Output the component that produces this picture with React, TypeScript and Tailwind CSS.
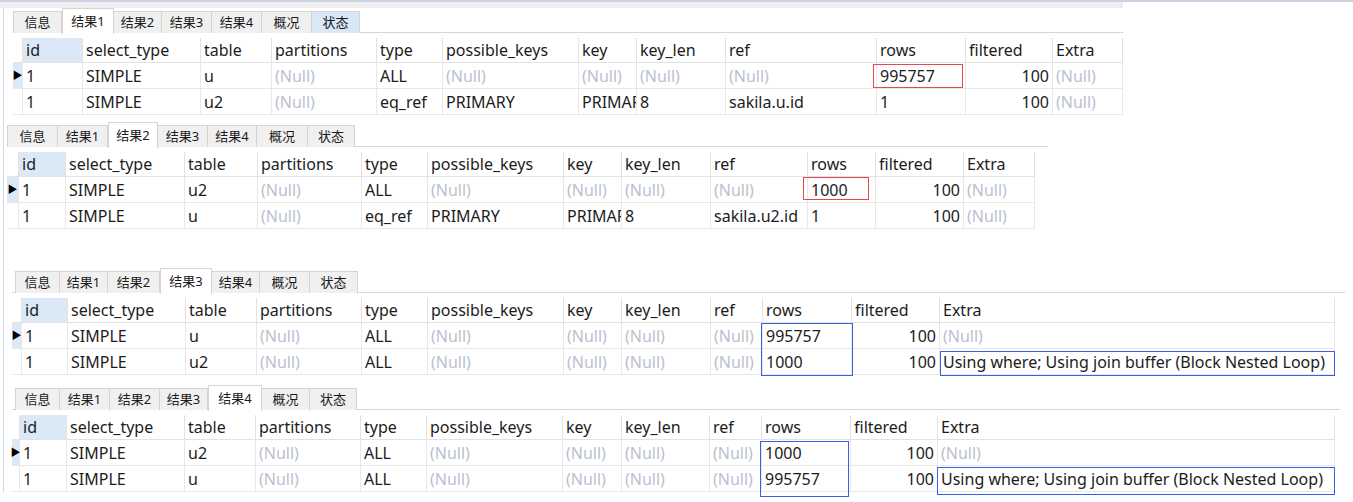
// Four stacked Navicat-style EXPLAIN result panels.
// Each panel is described once in `panels`; its column track sizes,
// offsets and highlight boxes are full Tailwind class strings.

type Cell = string | null;

type Panel = {
  active: number;
  hover?: number;
  bar: string; // tab bar offset, width and tab inset
  tabCols: string;
  table: string; // table offset + column tracks
  gap: string;
  rows: Cell[][];
  boxes: { cls: string; red?: boolean }[];
};

const headers = [
  "id",
  "select_type",
  "table",
  "partitions",
  "type",
  "possible_keys",
  "key",
  "key_len",
  "ref",
  "rows",
  "filtered",
  "Extra",
];

const tabs = ["信息", "结果1", "结果2", "结果3", "结果4", "概况", "状态"];

const nested = "Using where; Using join buffer (Block Nested Loop)";

const panels: Panel[] = [
  {
    active: 1,
    hover: 6,
    bar: "ml-[9px] w-[1110px]",
    tabCols: "grid-cols-[49px_52px_48px_50px_50px_50px_48px]",
    table: "ml-[9px] grid-cols-[10px_60px_118px_71px_105px_66px_136px_58px_89px_151px_89px_87px_70px]",
    gap: "",
    rows: [
      ["1", "SIMPLE", "u", null, "ALL", null, null, null, null, "995757", "100", null],
      ["1", "SIMPLE", "u2", null, "eq_ref", "PRIMARY", "PRIMARY", "8", "sakila.u.id", "1", "100", null],
    ],
    boxes: [{ cls: "left-[869px] top-[26px] h-[24px] w-[90px]", red: true }],
  },
  {
    active: 2,
    bar: "ml-[3px] w-[1041px]",
    tabCols: "grid-cols-[51px_50px_50px_50px_49px_51px_47px]",
    table: "ml-[3px] grid-cols-[12px_47px_119px_73px_104px_66px_136px_58px_89px_97px_68px_88px_71px]",
    gap: "mt-[7px]",
    rows: [
      ["1", "SIMPLE", "u2", null, "ALL", null, null, null, null, "1000", "100", null],
      ["1", "SIMPLE", "u", null, "eq_ref", "PRIMARY", "PRIMARY", "8", "sakila.u2.id", "1", "100", null],
    ],
    boxes: [{ cls: "left-[799px] top-[25px] h-[23px] w-[66px]", red: true }],
  },
  {
    active: 3,
    bar: "ml-[8px] w-[1333px] pl-[3px]",
    tabCols: "grid-cols-[45px_48px_52px_52px_48px_50px_48px]",
    table: "ml-[8px] grid-cols-[10px_46px_118px_71px_105px_66px_136px_58px_89px_52px_89px_88px_395px]",
    gap: "mt-[39px]",
    rows: [
      ["1", "SIMPLE", "u", null, "ALL", null, null, null, null, "995757", "100", null],
      ["1", "SIMPLE", "u2", null, "ALL", null, null, null, null, "1000", "100", nested],
    ],
    boxes: [
      { cls: "left-[757px] top-[25px] h-[53px] w-[92px]" },
      { cls: "left-[936px] top-[53px] h-[25px] w-[395px]" },
    ],
  },
  {
    active: 4,
    bar: "ml-[8px] w-[1328px] pl-[3px]",
    tabCols: "grid-cols-[45px_50px_50px_48px_54px_48px_47px]",
    table: "ml-[8px] grid-cols-[8px_47px_118px_71px_105px_66px_136px_59px_88px_52px_89px_87px_397px]",
    gap: "mt-[10px]",
    rows: [
      ["1", "SIMPLE", "u2", null, "ALL", null, null, null, null, "1000", "100", null],
      ["1", "SIMPLE", "u", null, "ALL", null, null, null, null, "995757", "100", nested],
    ],
    boxes: [
      { cls: "left-[756px] top-[26px] h-[56px] w-[89px]" },
      { cls: "left-[933px] top-[52px] h-[28px] w-[398px]" },
    ],
  },
];

function TabBar({ p }: { p: Panel }) {
  return (
    <div className={`h-[25px] border-b border-[#d4d4d4] ${p.bar}`}>
      <div className={`grid h-full w-max items-end ${p.tabCols}`}>
        {tabs.map((t, i) => {
          if (i === p.active) {
            return (
              <div
                key={t}
                className="relative z-10 flex h-[26px] items-start justify-center border border-b-0 border-[#d4d4d4] bg-white pt-[3px] text-[13px] text-[#1a1a1a] -mb-px"
              >
                {t}
              </div>
            );
          }
          return (
            <div
              key={t}
              className={
                i === p.hover
                  ? "flex h-[22px] items-center justify-center border-t border-r border-[#d4d4d4] bg-[#d9e7f6] text-[13px] text-[#1a1a1a]"
                  : "flex h-[22px] items-center justify-center border-t border-r border-[#d4d4d4] bg-[#f0f0f0] text-[13px] text-[#1a1a1a] first:border-l"
              }
            >
              {t}
            </div>
          );
        })}
      </div>
    </div>
  );
}

const cellBase = "flex h-[26px] items-center overflow-hidden whitespace-nowrap border-r border-b border-[#e8e8e8] text-[16px]";

function Grid({ p }: { p: Panel }) {
  return (
    <div className="relative mt-[5px]">
      <div className={`grid w-max ${p.table}`}>
        <div className="h-[25px] border-r border-b border-[#e2e2e2]" />
        {headers.map((h, i) => (
          <div
            key={h}
            className={
              i === 0
                ? "flex h-[25px] items-center overflow-hidden whitespace-nowrap border-r border-b border-[#e2e2e2] bg-[#dbe8f6] pl-[3px] text-[16px] text-[#1c1c1c]"
                : "flex h-[25px] items-center overflow-hidden whitespace-nowrap border-r border-b border-[#e2e2e2] pl-[3px] text-[16px] text-[#1c1c1c]"
            }
          >
            {h}
          </div>
        ))}
        {p.rows.map((row, r) => [
          <div
            key={`ind${r}`}
            className={
              r === 0
                ? "flex h-[26px] items-center justify-center border-r border-b border-[#e8e8e8] bg-[#dbe8f6] text-[10px] text-black"
                : "h-[26px] border-r border-b border-[#e8e8e8]"
            }
          >
            {r === 0 ? "▶" : ""}
          </div>,
          ...row.map((c, i) => (
            <div
              key={`${r}-${i}`}
              className={
                c === null
                  ? `${cellBase} pl-[3px] text-[#b9c1cf]`
                  : i === 10
                  ? `${cellBase} justify-end pr-[3px] text-[#1c1c1c]`
                  : `${cellBase} pl-[3px] text-[#1c1c1c]`
              }
            >
              {c === null ? "(Null)" : c}
            </div>
          )),
        ])}
      </div>
      {p.boxes.map((b, i) => (
        <div
          key={i}
          className={`pointer-events-none absolute border-[1.5px] ${b.red ? "border-[#e5484d]" : "border-[#3a5fe0]"} ${b.cls}`}
        />
      ))}
    </div>
  );
}

export default function App() {
  return (
    <div className="h-[502px] w-[1353px] overflow-hidden bg-white font-['Noto_Sans','Noto_Sans_CJK_SC',sans-serif]">
      <div className="h-[2px] w-full bg-[#cbd3e3]" />
      <div className="h-[6px] w-[1123px] bg-[#eeeeee]" />
      <div className="ml-[3px] flex flex-col border-l border-[#d3d9e4]">
        {panels.map((p, i) => (
          <div key={i} className={p.gap}>
            <TabBar p={p} />
            <Grid p={p} />
          </div>
        ))}
      </div>
    </div>
  );
}
